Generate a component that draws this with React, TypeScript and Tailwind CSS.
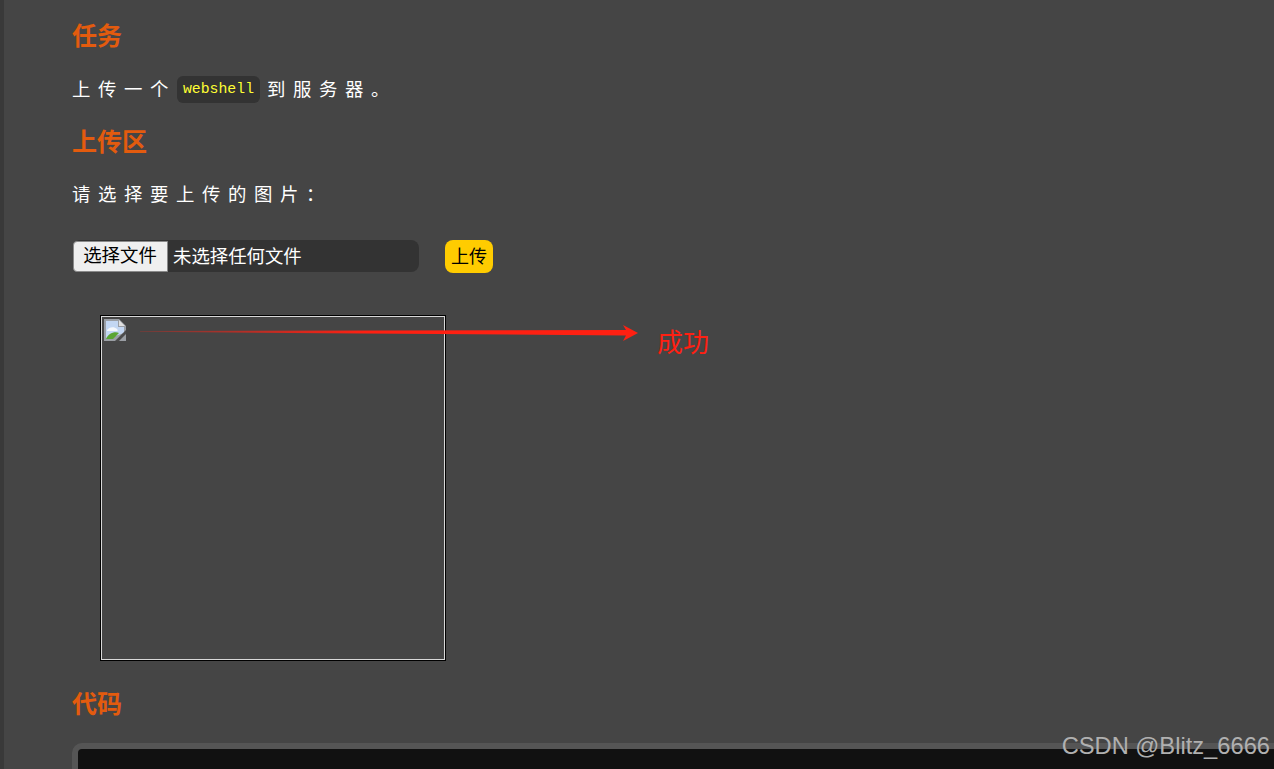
import React from "react";

const CJK = "font-['Liberation_Sans','Noto_Sans_CJK_SC',sans-serif]";

function SectionTitle({ children, className = "" }: { children: React.ReactNode; className?: string }) {
  return (
    <h2 className={`h-[36px] text-[25px] leading-[36px] font-bold text-[#e35b0e] ml-[-1px] ${className}`}>{children}</h2>
  );
}

function BrokenImage() {
  return (
    <svg width="22" height="22" viewBox="0 0 22 22" className="block">
      <path d="M0 0h15l7 7v15H0z" fill="#9a9ea4" />
      <path d="M2 2h12v6h6v6L2 20z" fill="#c3d7f3" />
      <path d="M3 11c2-3 7-4 10-1 1 1 1 2 0 2H3z" fill="#f4f7fb" />
      <path d="M2 20c2-5 8-8 13-6l-6 6z" fill="#5aa532" />
      <path d="M11 22 22 11v4l-7 7z" fill="#4c4c4c" />
      <path d="M15 1v6h6z" fill="#e0e0e0" />
    </svg>
  );
}

function Arrow() {
  return (
    <svg width="500" height="20" viewBox="0 0 500 20" className="block">
      <defs>
        <linearGradient id="arrow-fade" x1="0" x2="1" y1="0" y2="0">
          <stop offset="0" stopColor="#ff2012" stopOpacity="0.25" />
          <stop offset="0.45" stopColor="#ff2012" />
          <stop offset="1" stopColor="#ff2012" />
        </linearGradient>
      </defs>
      <polygon points="0,8 486,7 483,2 498,10 483,18 486,12.5 0,8.8" fill="url(#arrow-fade)" />
    </svg>
  );
}

export default function App() {
  return (
    <div className={`relative flex h-[769px] w-[1274px] overflow-hidden bg-[#454545] ${CJK}`}>
      {/* left edge */}
      <div className="w-[4px] shrink-0 bg-[#393939]" />

      <main className="min-w-0 flex-1 pl-[69px] pt-[18px]">
        <SectionTitle>任务</SectionTitle>

        <p className="mt-[22px] flex h-[27px] items-center text-[18.4px] tracking-[7.6px] text-white">
          <span className="ml-[-1px] mr-[1px]">上传一个</span>
          <code className="mr-[7px] rounded-[6px] bg-[#333333] px-[6px] text-[14.8px] leading-[27px] tracking-normal text-[#ffff33] font-['Liberation_Mono',monospace]">
            webshell
          </code>
          <span>到服务器。</span>
        </p>

        <SectionTitle className="mt-[21px]">上传区</SectionTitle>

        <p className="mt-[21px] ml-[-1px] h-[27px] text-[18.4px] leading-[27px] tracking-[7.6px] text-white">请选择要上传的图片：</p>

        <form className="mt-[32px] flex items-start gap-[26px]">
          <div className="flex h-[32px] w-[346px] items-center rounded-[8px] bg-[#333333] pt-[1px] text-[18.4px] text-white">
            <button
              type="button"
              className="h-[31px] w-[95px] self-end rounded-l-[4px] border border-[#8a8a8a] bg-[#efefef] pr-[1px] text-[18.4px] leading-none text-black"
            >
              选择文件
            </button>
            <span className="ml-[5px]">未选择任何文件</span>
          </div>
          <button
            type="button"
            className="h-[33px] w-[48px] rounded-[8px] bg-[#ffcc00] text-[18px] leading-none text-black"
          >
            上传
          </button>
        </form>

        <div className="ml-[27px] mt-[42px] h-[346px] w-[346px] border border-black">
          <div className="h-full w-full border border-[#d8d8d8] pl-[2px] pt-[2px]">
            <BrokenImage />
          </div>
        </div>

        <SectionTitle className="mt-[25px]">代码</SectionTitle>

        <div className="ml-[-1px] mt-[21px] h-[60px] w-[1300px] rounded-[10px] border-[6px] border-[#555555] bg-[#111111]" />
      </main>

      {/* annotation drawn over the shot */}
      <div className="absolute left-[140px] top-[323px]">
        <Arrow />
      </div>
      <span className="absolute left-[657px] top-[325px] text-[26px] leading-[36px] text-[#ff2012]">成功</span>

      {/* watermark */}
      <span className="absolute right-[4px] top-[731px] text-[23.7px] leading-[30px] text-[#b0b0b0] font-['Liberation_Sans',sans-serif]">
        CSDN @Blitz_6666
      </span>
    </div>
  );
}
